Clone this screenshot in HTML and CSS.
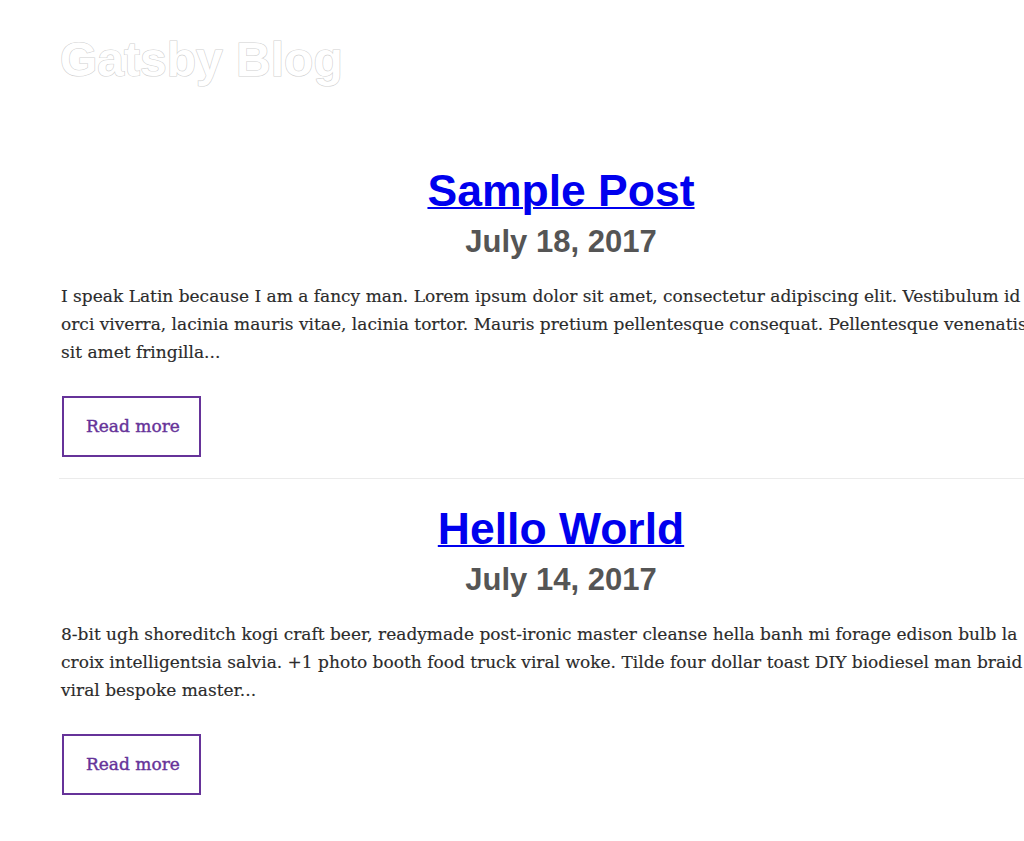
FILE: index.html
```html
<!DOCTYPE html>
<html lang="en">
<head>
<meta charset="utf-8">
<title>Gatsby Blog</title>
<link rel="stylesheet" href="styles.css">
</head>
<body>
<header class="site-header">
  <h1 class="site-title">Gatsby Blog</h1>
</header>
<main class="posts">
  <article class="post">
    <h2 class="post-title"><a href="#">Sample Post</a></h2>
    <h3 class="post-date">July 18, 2017</h3>
    <p class="post-excerpt">I speak Latin because I am a fancy man. Lorem ipsum dolor sit amet, consectetur adipiscing elit. Vestibulum id orci viverra, lacinia mauris vitae, lacinia tortor. Mauris pretium pellentesque consequat. Pellentesque venenatis sit amet fringilla...</p>
    <a class="read-more" href="#">Read more</a>
    <hr class="divider">
  </article>
  <article class="post">
    <h2 class="post-title"><a href="#">Hello World</a></h2>
    <h3 class="post-date">July 14, 2017</h3>
    <p class="post-excerpt">8-bit ugh shoreditch kogi craft beer, readymade post-ironic master cleanse hella banh mi forage edison bulb la croix intelligentsia salvia. +1 photo booth food truck viral woke. Tilde four dollar toast DIY biodiesel man braid viral bespoke master...</p>
    <a class="read-more" href="#">Read more</a>
  </article>
</main>
</body>
</html>
```

FILE: styles.css
```css
html {
  overflow-x: hidden;
}
body {
  margin: 0;
  background: #fff;
  font-family: "Liberation Sans", Arial, sans-serif;
}
.site-header {
  padding: 30px 60px 0;
  height: 134px;
  box-sizing: border-box;
}
.site-title {
  margin: 0;
  font-size: 48px;
  line-height: 60px;
  font-weight: 700;
  color: #fff;
  -webkit-text-stroke: 1.2px #d0d0d0;
  paint-order: stroke fill;
}
.posts {
  margin-left: 61px;
  width: 1000px;
  padding-top: 32px;
}
.post {
  display: flex;
  flex-direction: column;
  align-items: flex-start;
}
.post-title {
  align-self: stretch;
  margin: 0;
  text-align: center;
  font-size: 44.5px;
  line-height: 50px;
  font-weight: 700;
}
.post-title a {
  color: #0000ee;
  text-decoration: underline;
  text-decoration-thickness: 2px;
}
.post-date {
  align-self: stretch;
  margin: 8px 0 0;
  text-align: center;
  font-size: 31px;
  line-height: 36px;
  font-weight: 700;
  color: #555;
}
.post-excerpt {
  margin: 22px 0 0;
  width: 984px;
  font-family: "DejaVu Serif", Georgia, serif;
  font-size: 17px;
  line-height: 28px;
  color: #2b2b2b;
  -webkit-text-stroke: 0.15px #2b2b2b;
}
.read-more {
  margin: 30px 0 0 1px;
  display: block;
  box-sizing: border-box;
  width: 139px;
  height: 61px;
  line-height: 57px;
  padding-left: 22px;
  border: 2px solid #663399;
  color: #663399;
  text-decoration: none;
  font-family: "DejaVu Serif", Georgia, serif;
  font-size: 17px;
  -webkit-text-stroke: 0.4px #663399;
}
.divider {
  align-self: stretch;
  margin: 21px 0 25px -2px;
  border: 0;
  height: 1px;
  background: #ebebeb;
}
```
